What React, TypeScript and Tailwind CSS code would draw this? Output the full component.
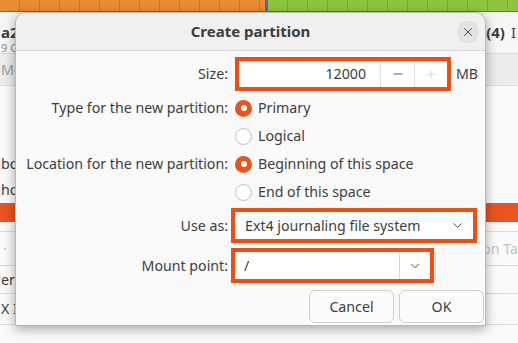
import { ChevronDown, Minus, Plus, X } from 'lucide-react';

function Radio({ checked, label }: { checked?: boolean; label: string }) {
	return (
		<div className="flex items-center gap-[6px] h-[28px]">
			{checked ?
				<span className="w-[17px] h-[17px] rounded-full bg-[#e95420] flex items-center justify-center">
					<span className="w-[6px] h-[6px] rounded-full bg-white" />
				</span>
			:	<span className="w-[17px] h-[17px] rounded-full bg-white border border-[#c0c0c0]" />}
			<span>{label}</span>
		</div>
	);
}

function Row({ label, h, children }: { label: string; h: string; children: React.ReactNode }) {
	return (
		<div className={`flex items-center ${h}`}>
			<div className="w-[219px] text-right pr-[7px] shrink-0">{label}</div>
			<div className="flex-1 flex items-center">{children}</div>
		</div>
	);
}

export default function App() {
	return (
		<div className="relative w-[518px] h-[343px] overflow-hidden bg-[#fafafa] font-['Noto_Sans',sans-serif] text-[14.2px] text-[#3d3d3d]">
			{/* window behind the dialog */}
			<div className="flex h-[12px] border-b border-[#9a6a2a]">
				<div className="w-[265px] bg-[repeating-linear-gradient(90deg,#e98c33_0,#e98c33_19px,#c9772a_19px,#c9772a_20px)]" />
				<div className="w-[3px] bg-[#4d6fa0]" />
				<div className="flex-1 bg-[repeating-linear-gradient(90deg,#8cc63f_0,#8cc63f_19px,#74a933_19px,#74a933_20px)]" />
			</div>
			<div className="flex justify-between h-[42px] bg-[#f6f6f6] border-b border-[#dcdcdc]">
				<div className="pl-[1px] pt-[11px] flex flex-col">
					<span className="font-bold text-[15px] leading-[18px]">a2</span>
					<span className="text-[11px] leading-[13px] text-[#8a8a8a]">9 G</span>
				</div>
				<div className="flex gap-[6px] pr-[2px] pt-[11px] font-bold text-[15px] leading-[18px]">
					<span>(4)</span>
					<span className="font-normal">I</span>
				</div>
			</div>
			<div className="h-[32px] bg-[#ececec] text-[#9a9a9a] pl-[1px] flex items-center border-b border-[#dcdcdc]">Mo</div>
			<div className="h-[64px]" />
			<div className="h-[27px] pl-[1px] flex items-center">bo</div>
			<div className="h-[26px] pl-[1px] flex items-center">ho</div>
			<div className="h-[19px] bg-[#e95420]" />
			<div className="h-[10px] border-b border-[#dcdcdc]" />
			<div className="h-[34px] flex items-center justify-between border-b border-[#dcdcdc] text-[#c0c0c0]">
				<span className="pl-[3px]">·</span>
				<span className="whitespace-nowrap">on Ta</span>
			</div>
			<div className="h-[28px] pl-[1px] flex items-center border-b border-[#dcdcdc]">er i</div>
			<div className="h-[31px] pl-[1px] flex items-center border-b border-[#dcdcdc]">X I</div>

			{/* dialog window */}
			<div className="absolute left-[15px] top-[12px] w-[471px] h-[314px] flex flex-col rounded-t-[11px] bg-[#fafafa] border border-[#b8b8b8] shadow-[0_3px_12px_rgba(0,0,0,0.35)]">
				<div className="relative h-[38px] flex items-center justify-center bg-[#f0f0f0] border-b border-[#d6d6d6] rounded-t-[11px] shrink-0">
					<span className="font-bold text-[15px]">Create partition</span>
					<span className="absolute right-[6px] top-[8px] w-[22px] h-[22px] rounded-full bg-[#e2e2e2] flex items-center justify-center">
						<X size={14} strokeWidth={1.6} />
					</span>
				</div>

				<div className="flex flex-col pt-[6px]">
					<Row label="Size:" h="h-[34px]">
						<div className="w-[216px] h-[34px] border-[4px] border-[#ec4f0f] bg-white flex">
							<div className="flex-1 pr-[14px] flex items-center justify-end">12000</div>
							<div className="w-[34px] border-l border-[#e0e0e0] flex items-center justify-center">
								<Minus size={14} strokeWidth={1.4} />
							</div>
							<div className="w-[33px] border-l border-[#e0e0e0] flex items-center justify-center text-[#c8c8c8]">
								<Plus size={14} strokeWidth={1.2} />
							</div>
						</div>
						<span className="ml-[5px]">MB</span>
					</Row>
					<div className="h-[3px]" />
					<Row label="Type for the new partition:" h="h-[28px]">
						<Radio checked label="Primary" />
					</Row>
					<Row label="" h="h-[28px]">
						<Radio label="Logical" />
					</Row>
					<Row label="Location for the new partition:" h="h-[28px]">
						<Radio checked label="Beginning of this space" />
					</Row>
					<Row label="" h="h-[28px]">
						<Radio label="End of this space" />
					</Row>
					<div className="h-[2px]" />
					<Row label="Use as:" h="h-[35px]">
						<div className="w-[246px] h-[35px] -ml-[4px] border-[4px] border-[#ec4f0f] bg-white flex items-center justify-between pl-[10px] pr-[8px]">
							<span>Ext4 journaling file system</span>
							<ChevronDown size={15} strokeWidth={1.5} />
						</div>
					</Row>
					<div className="h-[5px]" />
					<Row label="Mount point:" h="h-[35px]">
						<div className="relative w-[203px] h-[35px] -ml-[4px]">
							<div className="absolute inset-0 right-[-2px] rounded-r-[6px] border border-[#d0d0d0]" />
							<div className="absolute inset-0 border-[4px] border-[#ec4f0f] bg-white flex items-center">
								<span className="flex-1 pl-[9px]">/</span>
								<span className="w-[31px] h-full border-l border-[#d8d8d8] flex items-center justify-center">
									<ChevronDown size={14} strokeWidth={1.5} />
								</span>
							</div>
						</div>
					</Row>
					<div className="flex justify-end gap-[5px] pr-[1px] mt-[7px]">
						<button className="w-[85px] h-[33px] rounded-[6px] border border-[#cdcdcd] bg-[#fbfbfb]">Cancel</button>
						<button className="w-[85px] h-[33px] rounded-[6px] border border-[#cdcdcd] bg-[#fbfbfb]">OK</button>
					</div>
				</div>
			</div>
		</div>
	);
}
